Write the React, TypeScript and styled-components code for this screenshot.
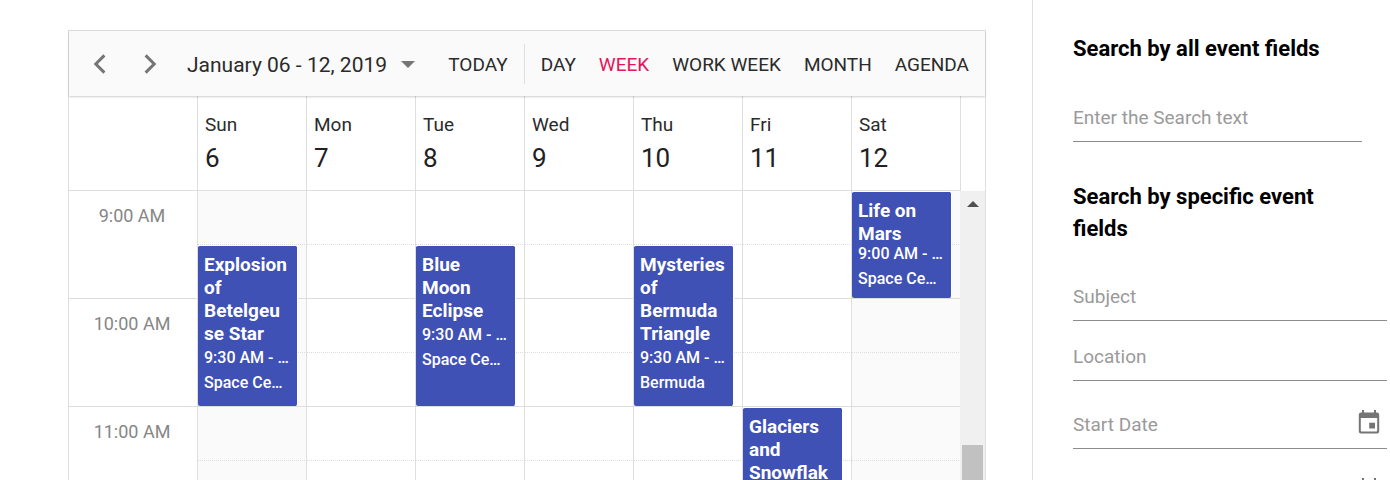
import React from "react";
import styled, { createGlobalStyle } from "styled-components";

const LINE = "#dedede";
const SLOT = 54;

const GlobalStyle = createGlobalStyle`
  *, *::before, *::after { box-sizing: border-box; }
  body {
    margin: 0;
    background: #fff;
    color: #212121;
    font-family: Roboto, "Liberation Sans", sans-serif;
  }
  button, input { font: inherit; }
`;

const Page = styled.div`
  display: flex;
  height: 100vh;
  overflow: hidden;
`;

const Main = styled.main`
  display: flex;
  flex: 1;
  min-width: 0;
  padding: 30px 46px 0 68px;
`;

const Schedule = styled.section`
  display: flex;
  flex: 1;
  flex-direction: column;
  min-width: 0;
  border: 1px solid ${LINE};
  border-bottom: 0;
`;

const Toolbar = styled.header`
  position: relative;
  z-index: 2;
  display: flex;
  flex: none;
  align-items: center;
  height: 65px;
  padding: 0 16px 0 24px;
  background: #fafafa;
  box-shadow: 0 1px 2px rgba(0, 0, 0, 0.2);
`;

const ToolButton = styled.button<{ $active?: boolean }>`
  padding: 2px 0 0;
  border: 0;
  background: none;
  color: ${(p) => (p.$active ? "#e3165b" : "#2b2b2b")};
  font-size: 19px;
  line-height: 40px;
  white-space: nowrap;
  cursor: pointer;
`;

const ArrowButton = styled(ToolButton)`
  display: flex;
  align-items: center;
  height: 40px;
  margin-right: 38px;
  padding: 0;
  color: #757575;
`;

const RangeButton = styled(ToolButton)`
  display: flex;
  align-items: center;
  gap: 14px;
  margin: 0 auto 0 -8px;
  font-size: 21px;
`;

const Separator = styled.span`
  width: 1px;
  height: 40px;
  margin: 0 16px;
  background: ${LINE};
`;

const Views = styled.nav`
  display: flex;
  gap: 23px;
`;

const HeaderWrap = styled.div`
  flex: none;
  padding-right: 24px;
`;

const Grid = styled.table`
  width: 100%;
  table-layout: fixed;
  border-spacing: 0;
`;

const TimeCol = styled.col`
  width: 129px;
`;

const DayHead = styled.th`
  height: 95px;
  padding: 0 8px 3px 7px;
  border-right: 1px solid ${LINE};
  border-bottom: 1px solid ${LINE};
  font-weight: 400;
  text-align: left;
`;

const DayName = styled.div`
  color: #2b2b2b;
  font-size: 19px;
  line-height: 32px;
`;

const DayNumber = styled.div`
  font-size: 26px;
  line-height: 34px;
`;

const Body = styled.div`
  display: flex;
  flex: 1;
  min-height: 0;
  overflow: hidden;
`;

const GridWrap = styled.div`
  flex: 1;
  min-width: 0;
`;

const TimeCell = styled.th`
  height: ${SLOT * 2}px;
  padding: 12px 2px 0 0;
  border-right: 1px solid ${LINE};
  border-bottom: 1px solid ${LINE};
  color: #868686;
  font-size: 18px;
  font-weight: 400;
  line-height: 26px;
  text-align: center;
  vertical-align: top;
`;

const Slot = styled.td<{ $off: boolean; $half: boolean }>`
  position: relative;
  height: ${SLOT}px;
  padding: 0;
  border-right: 1px solid ${LINE};
  border-bottom: 1px ${(p) => (p.$half ? "dotted" : "solid")} ${LINE};
  background: ${(p) => (p.$off ? "#fafafa" : "#fff")};
`;

const EventCard = styled.article<{ $slots: number }>`
  position: absolute;
  z-index: 1;
  top: 0;
  left: 0;
  display: flex;
  flex-direction: column;
  width: calc(100% - 8px);
  height: ${(p) => p.$slots * SLOT - 1}px;
  padding: 7px 6px;
  border: 1px solid #fff;
  border-width: 1px 1px 0 0;
  border-radius: 2px;
  background: #3f51b5;
  background-clip: padding-box;
  color: #fff;
`;

const EventTitle = styled.div`
  flex: 0 1 auto;
  min-height: 0;
  font-size: 19px;
  font-weight: 700;
  line-height: 23px;
  overflow-wrap: anywhere;
`;

const EventDetail = styled.div`
  flex: none;
  overflow: hidden;
  font-size: 16px;
  font-weight: 500;
  line-height: 25px;
  text-overflow: ellipsis;
  white-space: nowrap;
`;

const ScrollTrack = styled.div`
  position: relative;
  z-index: 2;
  display: flex;
  flex: none;
  flex-direction: column;
  align-items: center;
  width: 25px;
  margin-left: -1px;
  padding-top: 10px;
  background: #f0f0f0;
  color: #505050;
`;

const ScrollArrow = styled.svg`
  flex: none;
`;

const ScrollThumb = styled.div`
  flex: none;
  width: 21px;
  height: 120px;
  margin-top: 238px;
  background: #c1c1c1;
`;

const Panel = styled.aside`
  flex: none;
  width: 358px;
  padding: 33px 3px 0 40px;
  border-left: 1px solid ${LINE};
`;

const PanelTitle = styled.h2`
  margin: 0;
  padding-right: 25px;
  color: #000;
  font-size: 22px;
  font-weight: 700;
  line-height: 32px;
`;

const SearchBox = styled.div`
  margin-bottom: 39px;
  padding: 27px 25px 0 0;
`;

const Fields = styled.form`
  padding-top: 26px;
`;

const Field = styled.div<{ $gap: number }>`
  display: flex;
  align-items: center;
  height: 50px;
  margin-bottom: ${(p) => p.$gap}px;
  border-bottom: 1px solid #8c8c8c;
`;

const TextInput = styled.input`
  flex: 1;
  min-width: 0;
  height: 48px;
  padding: 2px 0 0;
  border: 0;
  outline: 0;
  background: none;
  color: #212121;
  font-size: 19px;
  &::placeholder {
    color: #9a9a9a;
    opacity: 1;
  }
`;

const PickerButton = styled.button`
  display: flex;
  padding: 0 7px 4px;
  border: 0;
  background: none;
  color: #757575;
  cursor: pointer;
`;

function Chevron({ flip }: { flip?: boolean }) {
  return (
    <svg width="13" height="20" viewBox="0 0 13 20" fill="none" stroke="currentColor" strokeWidth="3">
      <path d={flip ? "M1.6 1.4 10.2 10 1.6 18.6" : "M11.4 1.4 2.8 10l8.6 8.6"} />
    </svg>
  );
}

function CalendarIcon() {
  return (
    <svg width="22" height="24" viewBox="0 0 22 24" fill="currentColor">
      <path
        fillRule="evenodd"
        d="M4 0h2v2.500h10V0h2v2.500h1A2.200 2.200 0 0 1 21.200 4.700v16.600A2.200 2.200 0 0 1 19 23.500H3A2.200 2.200 0 0 1 .8 21.300V4.700A2.200 2.200 0 0 1 3 2.500h1zM2.800 8v12.700c0 .5.300.8.800.8h14.800c.5 0 .8-.3.800-.8V8z"
      />
      <path d="M11.200 12.700h5.800v5.800h-5.800z" />
    </svg>
  );
}

type Appointment = { title: string; time: string; place: string; slots: number };

const days = [
  ["Sun", "6"],
  ["Mon", "7"],
  ["Tue", "8"],
  ["Wed", "9"],
  ["Thu", "10"],
  ["Fri", "11"],
  ["Sat", "12"],
];

const hours = ["9:00 AM", "10:00 AM", "11:00 AM", "12:00 PM"];

/* Keyed by "day-slot", where slot 0 is 9:00 AM and each slot lasts 30 minutes.
   A zero-width space marks where a long word may break. */
const appointments: Record<string, Appointment> = {
  "0-1": { title: "Explosion of Betelgeu\u200bse Star", time: "9:30 AM - 11:00 AM", place: "Space Center USA", slots: 3 },
  "2-1": { title: "Blue Moon Eclipse", time: "9:30 AM - 11:00 AM", place: "Space Center USA", slots: 3 },
  "4-1": { title: "Mysteries of Bermuda Triangle", time: "9:30 AM - 11:00 AM", place: "Bermuda", slots: 3 },
  "5-4": { title: "Glaciers and Snowflak\u200bes", time: "11:00 AM - 12:30 PM", place: "Himalayas", slots: 3 },
  "6-0": { title: "Life on Mars", time: "9:00 AM - 10:00 AM", place: "Space Center USA", slots: 2 },
};

function Columns() {
  return (
    <colgroup>
      <TimeCol />
      <col span={7} />
    </colgroup>
  );
}

function SlotCells({ slot }: { slot: number }) {
  return (
    <>
      {days.map(([name], day) => {
        const item = appointments[`${day}-${slot}`];
        return (
          <Slot key={name} $off={day === 0 || day === 6} $half={slot % 2 === 0}>
            {item && (
              <EventCard $slots={item.slots}>
                <EventTitle>{item.title}</EventTitle>
                <EventDetail>{item.time}</EventDetail>
                <EventDetail>{item.place}</EventDetail>
              </EventCard>
            )}
          </Slot>
        );
      })}
    </>
  );
}

function DateField({ label }: { label: string }) {
  return (
    <Field $gap={18}>
      <TextInput aria-label={label} placeholder={label} />
      <PickerButton type="button" aria-label={`Choose ${label}`}>
        <CalendarIcon />
      </PickerButton>
    </Field>
  );
}

export default function App() {
  return (
    <Page>
      <GlobalStyle />
      <Main>
        <Schedule>
          <Toolbar>
            <ArrowButton aria-label="Previous">
              <Chevron />
            </ArrowButton>
            <ArrowButton aria-label="Next">
              <Chevron flip />
            </ArrowButton>
            <RangeButton>
              January 06 - 12, 2019
              <svg width="14" height="7" viewBox="0 0 14 7" fill="#757575">
                <path d="M0 0h14L7 7z" />
              </svg>
            </RangeButton>
            <ToolButton>TODAY</ToolButton>
            <Separator />
            <Views>
              <ToolButton>DAY</ToolButton>
              <ToolButton $active>WEEK</ToolButton>
              <ToolButton>WORK WEEK</ToolButton>
              <ToolButton>MONTH</ToolButton>
              <ToolButton>AGENDA</ToolButton>
            </Views>
          </Toolbar>
          <HeaderWrap>
            <Grid>
              <Columns />
              <thead>
                <tr>
                  <DayHead as="td" />
                  {days.map(([name, number]) => (
                    <DayHead key={name} scope="col">
                      <DayName>{name}</DayName>
                      <DayNumber>{number}</DayNumber>
                    </DayHead>
                  ))}
                </tr>
              </thead>
            </Grid>
          </HeaderWrap>
          <Body>
            <GridWrap>
              <Grid>
                <Columns />
                <tbody>
                  {hours.map((hour, i) => (
                    <React.Fragment key={hour}>
                      <tr>
                        <TimeCell rowSpan={2} scope="row">
                          {hour}
                        </TimeCell>
                        <SlotCells slot={i * 2} />
                      </tr>
                      <tr>
                        <SlotCells slot={i * 2 + 1} />
                      </tr>
                    </React.Fragment>
                  ))}
                </tbody>
              </Grid>
            </GridWrap>
            <ScrollTrack>
              <ScrollArrow width="12" height="6" viewBox="0 0 12 6" fill="currentColor">
                <path d="M6 0l6 6H0z" />
              </ScrollArrow>
              <ScrollThumb />
            </ScrollTrack>
          </Body>
        </Schedule>
      </Main>
      <Panel>
        <PanelTitle>Search by all event fields</PanelTitle>
        <SearchBox>
          <Field $gap={0}>
            <TextInput aria-label="Search text" placeholder="Enter the Search text" />
          </Field>
        </SearchBox>
        <PanelTitle>Search by specific event fields</PanelTitle>
        <Fields>
          <Field $gap={10}>
            <TextInput aria-label="Subject" placeholder="Subject" />
          </Field>
          <Field $gap={18}>
            <TextInput aria-label="Location" placeholder="Location" />
          </Field>
          <DateField label="Start Date" />
          <DateField label="End Date" />
        </Fields>
      </Panel>
    </Page>
  );
}
